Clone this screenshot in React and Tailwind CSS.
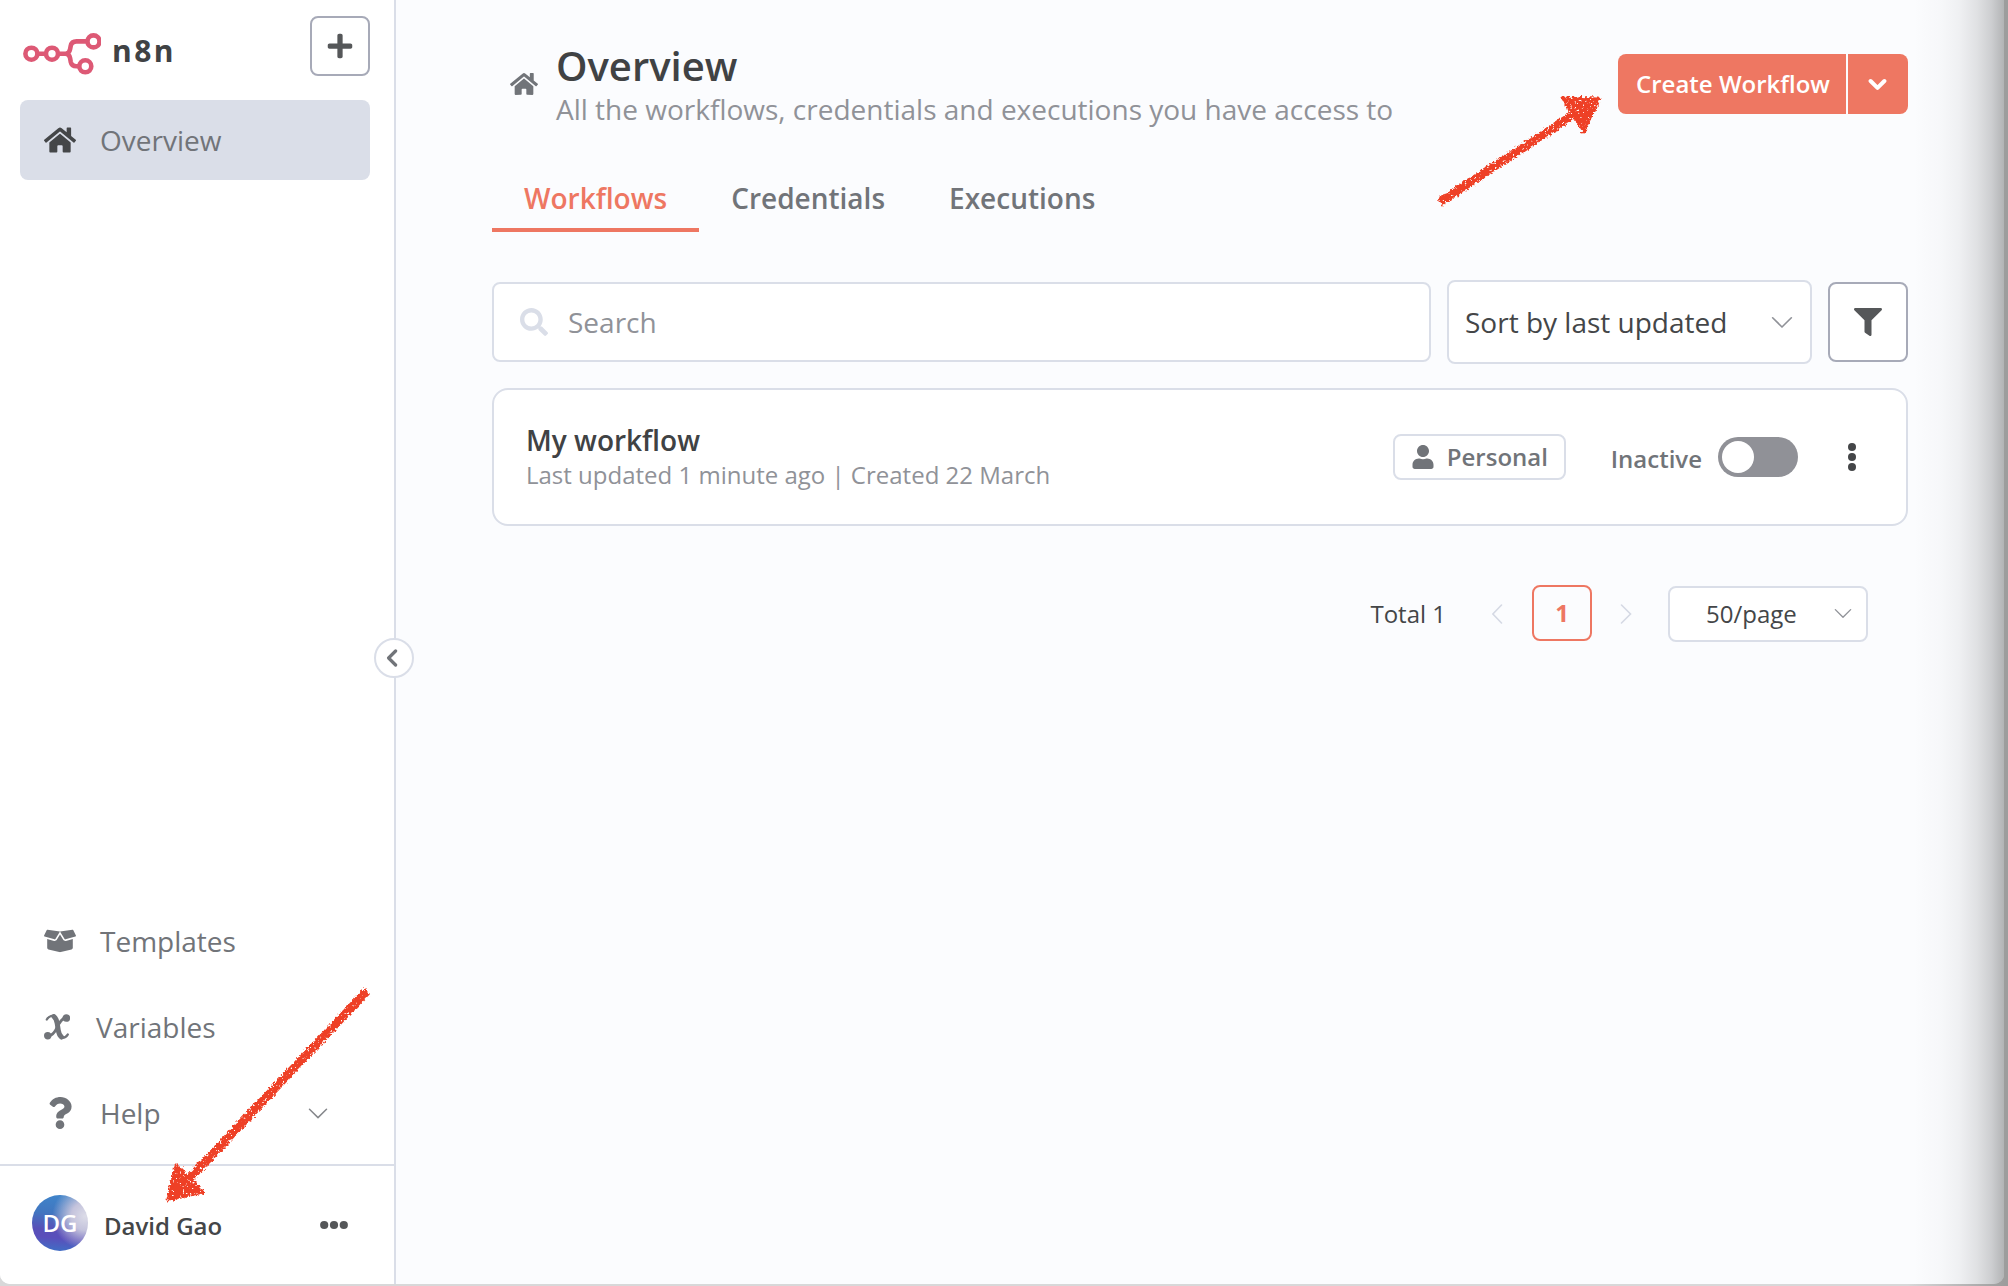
import React from "react";
import { FaHome, FaBoxOpen, FaQuestion, FaPlus, FaChevronLeft, FaSearch, FaFilter, FaUser } from "react-icons/fa";

function Logo() {
  return (
    <svg className="h-[42px] w-[78px] shrink-0" viewBox="0 0 78 42" fill="none" stroke="#dd5975" strokeWidth="4.6">
      <circle cx="8.4" cy="20.7" r="6" />
      <circle cx="29" cy="20.7" r="6" />
      <circle cx="70.5" cy="8.4" r="6" />
      <circle cx="62.3" cy="33.3" r="6" />
      <path d="M14.4 20.7H23M35 20.7h7.5M64.5 8.4H53.5c-3 0-5.2 1.6-5.8 4.6l-.6 3.2c-.5 2.800-2.100 4.500-4.600 4.500 2.500 0 4.100 1.700 4.600 4.500l.6 3.500c.6 3 2.800 4.600 5.800 4.600h2.800" />
    </svg>
  );
}

function VariableIcon() {
  return (
    <svg className="h-[26px] w-[26px]" viewBox="0 0 26 26" fill="none" stroke="currentColor" strokeLinecap="round">
      <path d="M2.800 5.600c.9-1.800 2.300-3 4.200-3.600 1.400-.4 2.800-.4 3.800.2" strokeWidth="2.200" />
      <path d="M10 2.600c2 1.600 2.700 3.800 3.200 6.800l1.100 7c.5 3 1.300 5.200 3.200 6.600" strokeWidth="5" />
      <path d="M17 23.800c3.200.4 5.400-.8 6.800-3.300" strokeWidth="2.400" />
      <path d="M21.500 3.600c-4.600 1.600-6.800 6.200-8.500 9.900-1.600 3.600-4 7.900-8.500 8.500" strokeWidth="2.800" />
      <circle cx="22.300" cy="4" r="2.400" strokeWidth="2.800" fill="currentColor" />
      <circle cx="3.700" cy="21.800" r="2.300" strokeWidth="2.800" fill="currentColor" />
    </svg>
  );
}

function ThinChevron({ className }) {
  return (
    <svg className={className} viewBox="0 0 20 11" fill="none" stroke="currentColor" strokeWidth="1.500" strokeLinecap="round" strokeLinejoin="round">
      <path d="M1.500 1.200 10 9.600l8.500-8.400" />
    </svg>
  );
}

function NavItem({ icon, label, active, trailing, labelClass = "ml-[24px]" }) {
  return (
    <div className={`flex h-[80px] items-center rounded-[8px] pl-6 pr-[42px] ${active ? "bg-[#dadee8]" : ""}`}>
      <span className={`flex w-8 items-center ${active ? "text-[#444648]" : "text-[#717479]"}`}>{icon}</span>
      <span className={`text-[28px] leading-[38px] text-[#717479] ${labelClass}`}>{label}</span>
      {trailing}
    </div>
  );
}

function Sidebar() {
  return (
    <aside className="relative flex w-[396px] shrink-0 flex-col border-r-2 border-[#dadee8] bg-white">
      <div className="flex h-[100px] justify-between pl-[23px] pr-6 pt-4">
        <div className="flex pt-[17px]">
          <Logo />
          <span className="ml-[11px] mt-[-3px] text-[30px] font-bold leading-[42px] tracking-[2.500px] text-[#404244]">n8n</span>
        </div>
        <button className="flex h-[60px] w-[60px] items-center justify-center rounded-[8px] border-2 border-[#a7aab8] text-[#555759]">
          <FaPlus className="h-[28px] w-[28px]" />
        </button>
      </div>
      <nav className="flex flex-1 flex-col pl-[20px] pr-6">
        <NavItem active icon={<FaHome className="mt-[-1px] h-8 w-8" />} label="Overview" />
        <div className="mt-auto flex flex-col gap-[6px] pb-[11px]">
          <NavItem icon={<FaBoxOpen className="mt-[-1px] h-8 w-8" />} label="Templates" />
          <NavItem icon={<VariableIcon />} label="Variables" labelClass="ml-[20px]" />
          <NavItem
            icon={<FaQuestion className="h-8 w-8" />}
            label="Help"
            trailing={<ThinChevron className="ml-auto h-[11px] w-[20px] text-[#85878b]" />}
          />
        </div>
      </nav>
      <div className="flex h-[120px] items-center border-t-2 border-[#dadee8] pl-8 pr-[46px]">
        <div className="mt-[-4px] flex h-[56px] w-[56px] items-center justify-center rounded-full bg-[radial-gradient(circle_at_95%_38%,#dcdce8_0%,#c4c3dc_22%,rgba(196,195,220,0)_52%),linear-gradient(185deg,#3f86cb_0%,#4176c0_35%,#5850b8_62%,#5a4fbb_75%,#3c72c6_100%)] text-[24px] font-semibold leading-none text-white">
          DG
        </div>
        <span className="ml-[16px] mt-[2px] text-[24px] font-semibold leading-[34px] text-[#444648]">David Gao</span>
        <svg className="ml-auto h-[10px] w-[28px] text-[#555759]" viewBox="0 0 28 10" fill="currentColor">
          <circle cx="4.200" cy="5" r="4.100" />
          <circle cx="14" cy="5" r="4.100" />
          <circle cx="23.800" cy="5" r="4.100" />
        </svg>
      </div>
      <button className="absolute left-[374px] top-[638px] flex h-10 w-10 items-center justify-center rounded-full border-2 border-[#dadee8] bg-white text-[#717479]">
        <svg className="mr-[4px] h-[18px] w-[12px]" viewBox="0 0 12 18" fill="none" stroke="currentColor" strokeWidth="3.200" strokeLinecap="round" strokeLinejoin="round">
          <path d="M9.600 2 2.600 9l7 7" />
        </svg>
      </button>
    </aside>
  );
}

function Header() {
  return (
    <header className="flex h-[87px] items-center pl-[18px]">
      <FaHome className="mt-[-2px] h-[28px] w-[28px] text-[#717479]" />
      <div className="ml-[18px]">
        <h1 className="text-[40px] font-semibold leading-[49px] text-[#404244]">Overview</h1>
        <p className="text-[28px] leading-[38px] text-[#909298]">
          All the workflows, credentials and executions you have access to
        </p>
      </div>
      <div className="mt-[-1px] ml-auto flex h-[60px] gap-[2px] text-white">
        <button className="flex w-[228px] items-center justify-center rounded-l-[8px] bg-[#ee7762] pl-[2px] text-[24px] font-semibold">
          Create Workflow
        </button>
        <button className="flex w-[60px] items-center justify-center rounded-r-[8px] bg-[#ee7762]">
          <svg className="mr-[1px] h-[13px] w-[19px]" viewBox="0 0 19 13" fill="none" stroke="currentColor" strokeWidth="4" strokeLinecap="round" strokeLinejoin="round">
            <path d="M2.600 3 9.500 9.900 16.400 3" />
          </svg>
        </button>
      </div>
    </header>
  );
}

function Tabs() {
  return (
    <div className="mt-[40px] flex h-16 text-[28px] font-semibold leading-[60px] text-[#717479]">
      <div className="border-b-4 border-[#ee7762] px-8 text-[#ee7762]">Workflows</div>
      <div className="px-8">Credentials</div>
      <div className="px-8">Executions</div>
    </div>
  );
}

function Toolbar() {
  return (
    <div className="mt-[48px] flex h-[84px] items-center gap-4">
      <div className="flex h-20 flex-1 items-center rounded-[8px] border-2 border-[#dadee8] bg-white pl-[26px]">
        <FaSearch className="h-[28px] w-[28px] text-[#dadee8]" />
        <span className="ml-[20px] text-[28px] text-[#909298]">Search</span>
      </div>
      <div className="flex h-[84px] w-[365px] items-center justify-between rounded-[8px] border-2 border-[#dadee8] bg-white pl-4 pr-[17px]">
        <span className="text-[28px] text-[#444648]">Sort by last updated</span>
        <ThinChevron className="h-[13px] w-[22px] text-[#909298]" />
      </div>
      <button className="flex h-20 w-20 items-center justify-center rounded-[8px] border-2 border-[#a7aab8] bg-white text-[#555759]">
        <FaFilter className="h-[28px] w-[28px]" />
      </button>
    </div>
  );
}

function WorkflowCard() {
  return (
    <div className="mt-6 flex h-[138px] items-center rounded-[16px] border-2 border-[#dadee8] bg-white pl-8 pr-[50px]">
      <div>
        <div className="text-[28px] font-semibold leading-[36px] text-[#404244]">My workflow</div>
        <div className="text-[24px] leading-[34px] text-[#909298]">Last updated 1 minute ago | Created 22 March</div>
      </div>
      <div className="ml-auto flex h-[46px] w-[173px] items-center rounded-[8px] border-2 border-[#dadee8] pl-[16px] text-[#717479]">
        <FaUser className="h-[24px] w-[24px]" />
        <span className="ml-[12px] mt-[-1px] text-[24px] font-semibold leading-none">Personal</span>
      </div>
      <span className="ml-[45px] mt-[3px] text-[24px] font-semibold leading-none text-[#717479]">Inactive</span>
      <div className="ml-[16px] flex h-[40px] w-[80px] items-center rounded-full bg-[#909197] pl-1">
        <div className="h-8 w-8 rounded-full bg-white" />
      </div>
      <svg className="ml-[50px] h-[30px] w-[8px] text-[#444648]" viewBox="0 0 8 30" fill="currentColor">
        <circle cx="4" cy="5" r="4" />
        <circle cx="4" cy="15" r="4" />
        <circle cx="4" cy="25" r="4" />
      </svg>
    </div>
  );
}

function Pagination() {
  return (
    <div className="mt-[59px] flex h-[58px] items-center justify-end pr-[40px] text-[24px] text-[#444648]">
      <span className="mt-[-1px]">Total 1</span>
      <svg className="ml-[46px] h-[20px] w-[12px] text-[#d5d9e4]" viewBox="0 0 12 20" fill="none" stroke="currentColor" strokeWidth="1.600" strokeLinecap="round">
        <path d="M9.500 1 .9 10l8.600 9" />
      </svg>
      <div className="mx-[28px] mt-[-2px] flex h-[56px] w-[60px] items-center justify-center rounded-[8px] border-2 border-[#ee7762] font-bold text-[#ee7762]">1</div>
      <svg className="h-[20px] w-[12px] text-[#d5d9e4]" viewBox="0 0 12 20" fill="none" stroke="currentColor" strokeWidth="1.600" strokeLinecap="round">
        <path d="m1.500 1 9 9-9 9" />
      </svg>
      <div className="ml-[36px] flex h-[56px] w-[200px] items-center rounded-[8px] border-2 border-[#dadee8] bg-white pl-[36px]">
        <span>50/page</span>
        <ThinChevron className="ml-auto mr-[14px] mt-[-2px] h-[11px] w-[18px] text-[#909298]" />
      </div>
    </div>
  );
}

function Annotations() {
  return (
    <svg className="pointer-events-none absolute inset-0 h-[1286px] w-[2008px]" viewBox="0 0 2008 1286" fill="#ee4126" stroke="#ee4126">
      <defs>
        <filter id="crayon" x="-10%" y="-10%" width="120%" height="120%">
          <feTurbulence type="fractalNoise" baseFrequency="0.4" numOctaves="2" seed="7" result="n" />
          <feDisplacementMap in="SourceGraphic" in2="n" scale="6" xChannelSelector="R" yChannelSelector="G" result="d" />
          <feColorMatrix in="n" type="matrix" values="0 0 0 0 0  0 0 0 0 0  0 0 0 0 0  0 0 0 -9 6.900" result="m" />
          <feComposite in="d" in2="m" operator="in" />
        </filter>
      </defs>
      <g filter="url(#crayon)">
        <path d="M1440 202 1573 115" strokeWidth="8.500" />
        <path d="M1562 98 1599 99 1584 132Z" strokeWidth="3" strokeLinejoin="round" />
      </g>
      <g filter="url(#crayon)">
        <path d="M367 991 188 1180" strokeWidth="8.500" />
        <path d="M176 1165 203 1192 168 1200Z" strokeWidth="3" strokeLinejoin="round" />
      </g>
    </svg>
  );
}

export default function App() {
  return (
    <div className="relative h-[1286px] w-[2008px] overflow-hidden bg-[linear-gradient(to_right,#d8d8d9_0%,#d8d8d9_95%,#9d9d9d_99.800%)] font-['Open_Sans',sans-serif]">
      <div className="relative flex h-[1284px] w-[2004px] overflow-hidden rounded-b-[10px] bg-[#fbfcfe]">
        <Sidebar />
        <main className="flex-1 pl-24 pr-[96px] pt-[41px]">
          <Header />
          <Tabs />
          <Toolbar />
          <WorkflowCard />
          <Pagination />
        </main>
        <div className="absolute right-0 top-0 h-full w-[90px] bg-[linear-gradient(to_right,rgba(120,120,120,0)_0%,rgba(110,112,115,0.03)_30%,rgba(100,102,105,0.08)_50%,rgba(90,92,95,0.17)_70%,rgba(80,82,85,0.27)_86%,rgba(75,77,78,0.41)_100%)]" />
      </div>
      <Annotations />
    </div>
  );
}
